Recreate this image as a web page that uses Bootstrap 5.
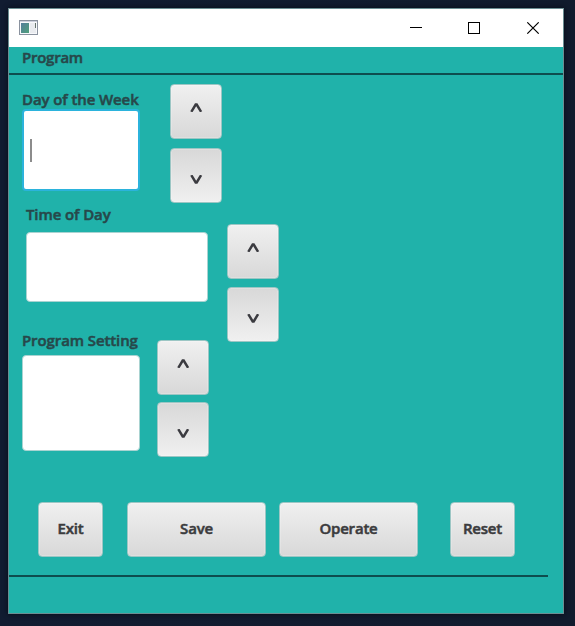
<!DOCTYPE html>
<html lang="en">
<head>
<meta charset="utf-8">
<meta name="viewport" content="width=device-width, initial-scale=1">
<title>Program</title>
<link href="https://cdn.jsdelivr.net/npm/bootstrap@5.3.0/dist/css/bootstrap.min.css" rel="stylesheet">
<style>
body{background:linear-gradient(90deg,#111c31,#111b2d);font-family:"Open Sans","Noto Sans",sans-serif;font-size:15px;font-weight:600;color:#27484a;padding:8px 11px 12px 8px;height:626px;overflow:hidden}
.window{width:556px;height:606px;border:1px solid #6b8d92;background:#20b2aa;box-shadow:0 0 5px #060b16}
.titlebar{height:38px;background:#fff;padding-left:10px}
.controls{margin-right:23px;gap:46px}
.controls svg,.app-icon{display:block}
.heading{height:28px;border-bottom:2px solid #0e4d4e;padding:0 0 0 13px}
.caption{line-height:20px;white-space:nowrap;font-size:15px;-webkit-text-stroke:.5px #27484a}
.t-program{letter-spacing:-.25px}
.t-day,.t-time,.t-setting{letter-spacing:-.1px}
.form-control.field{background:#fff;border:1px solid #a9d3d1;border-radius:4px;box-shadow:none;padding:0 7px}
.sec-day{height:131px;padding:9px 0 0 13px}
.sec-time{height:124px;padding:0 0 0 17px}
.sec-setting{height:172px;padding:0 0 0 13px}
.sec-day .field{width:118px;height:82px;border:2px solid #2bb3dc;margin-top:0;padding-left:6px}
.sec-day .caption{margin-top:5px;height:20px}
.sec-time .caption{margin-top:-2px}
.sec-time .field{width:182px;height:70px;margin-top:8px}
.sec-setting .field{width:118px;height:96px;margin-top:5px}
.sec-day .spin{margin-left:30px;gap:9px}
.sec-time .spin{margin:18px 0 0 19px;gap:8px}
.sec-setting .spin{margin:10px 0 0 17px;gap:7px}
.caret{width:2px;height:23px;background:#8c8c8c}
.btn.key{--bs-btn-color:#3b3b3d;background:linear-gradient(#f0f0f0,#d8d8d8);border:1px solid #9cc6c4;border-radius:4px;font-weight:600;font-size:15px;line-height:20px;padding:0 0 3px;height:55px;box-shadow:inset 0 0 0 1px #ffffff30;-webkit-text-stroke:.5px #3b3b3d;letter-spacing:-.2px}
.btn.step{width:52px;height:55px}
.btn.step.down{background:linear-gradient(#d8d8d8,#f0f0f0)}
.up svg{margin-top:-6px}
.down svg{margin-top:11px}
.step svg{display:block;margin-left:auto;margin-right:auto}
.actions{padding-left:29px;height:73px}
.w-exit{width:65px}.w-save{width:139px;margin-left:24px}.w-operate{width:139px;margin-left:13px}.w-reset{width:65px;margin-left:32px}
.rule-end{width:539px;height:2px;background:#0e4d4e}
</style>
</head>
<body>
<main class="window d-flex flex-column">
  <header class="titlebar d-flex align-items-center justify-content-between flex-shrink-0">
    <svg class="app-icon" width="20" height="16" viewBox="0 0 20 16"><rect x=".5" y=".5" width="18" height="14" fill="#f7f8fb" stroke="#8a929f"/><path d="M1 1.5H18" stroke="#cdd0dc"/><defs><linearGradient id="g" x2="1" y2="1"><stop stop-color="#547e9c"/><stop offset="1" stop-color="#4fa07b"/></linearGradient></defs><rect x="2" y="3" width="8" height="10" fill="url(#g)"/><rect x="11" y="3" width="6" height="10" fill="#e9ebef"/><path d="M16.5 3V8" stroke="#66756e"/></svg>
    <div class="controls d-flex align-items-center">
      <svg width="12" height="12"><path d="M0 5.5H12" stroke="#000"/></svg>
      <svg width="12" height="12"><rect x=".5" y=".5" width="11" height="11" fill="none" stroke="#000"/></svg>
      <svg width="14" height="12"><path d="M1.3.3 12.7 11.7M12.7.3 1.3 11.7" stroke="#000" stroke-width="1.1"/></svg>
    </div>
  </header>
  <div class="heading flex-shrink-0"><div class="caption t-program">Program</div></div>
  <section class="sec-day d-flex align-items-start flex-shrink-0">
    <div>
      <div class="caption t-day">Day of the Week</div>
      <div class="form-control field d-flex align-items-center" role="textbox" aria-label="Day of the Week"><span class="caret"></span></div>
    </div>
    <div class="spin d-flex flex-column">
      <button class="btn key step up" type="button" aria-label="Day up"><svg width="13" height="9" viewBox="0 0 13 9"><path d="M1.3 8.8 5.7 1.5H6.7L11.1 8.8" fill="none" stroke="#3b3b40" stroke-width="2.5"/></svg></button>
      <button class="btn key step down" type="button" aria-label="Day down"><svg width="13" height="9" viewBox="0 0 13 9"><path d="M1.3.2 5.7 7.5H6.7L11.1.2" fill="none" stroke="#3b3b40" stroke-width="2.5"/></svg></button>
    </div>
  </section>
  <section class="sec-time d-flex align-items-start flex-shrink-0">
    <div>
      <div class="caption t-time">Time of Day</div>
      <div class="form-control field" role="textbox" aria-label="Time of Day"></div>
    </div>
    <div class="spin d-flex flex-column">
      <button class="btn key step up" type="button" aria-label="Time up"><svg width="13" height="9" viewBox="0 0 13 9"><path d="M1.3 8.8 5.7 1.5H6.7L11.1 8.8" fill="none" stroke="#3b3b40" stroke-width="2.5"/></svg></button>
      <button class="btn key step down" type="button" aria-label="Time down"><svg width="13" height="9" viewBox="0 0 13 9"><path d="M1.3.2 5.7 7.5H6.7L11.1.2" fill="none" stroke="#3b3b40" stroke-width="2.5"/></svg></button>
    </div>
  </section>
  <section class="sec-setting d-flex align-items-start flex-shrink-0">
    <div>
      <div class="caption t-setting">Program Setting</div>
      <div class="form-control field" role="textbox" aria-label="Program Setting"></div>
    </div>
    <div class="spin d-flex flex-column">
      <button class="btn key step up" type="button" aria-label="Setting up"><svg width="13" height="9" viewBox="0 0 13 9"><path d="M1.3 8.8 5.7 1.5H6.7L11.1 8.8" fill="none" stroke="#3b3b40" stroke-width="2.5"/></svg></button>
      <button class="btn key step down" type="button" aria-label="Setting down"><svg width="13" height="9" viewBox="0 0 13 9"><path d="M1.3.2 5.7 7.5H6.7L11.1.2" fill="none" stroke="#3b3b40" stroke-width="2.5"/></svg></button>
    </div>
  </section>
  <div class="actions d-flex align-items-start flex-shrink-0">
    <button class="btn key w-exit" type="button">Exit</button>
    <button class="btn key w-save" type="button">Save</button>
    <button class="btn key w-operate" type="button">Operate</button>
    <button class="btn key w-reset" type="button">Reset</button>
  </div>
  <div class="rule-end flex-shrink-0"></div>
</main>
<script src="https://cdn.jsdelivr.net/npm/bootstrap@5.3.0/dist/js/bootstrap.bundle.min.js"></script>
</body>
</html>
